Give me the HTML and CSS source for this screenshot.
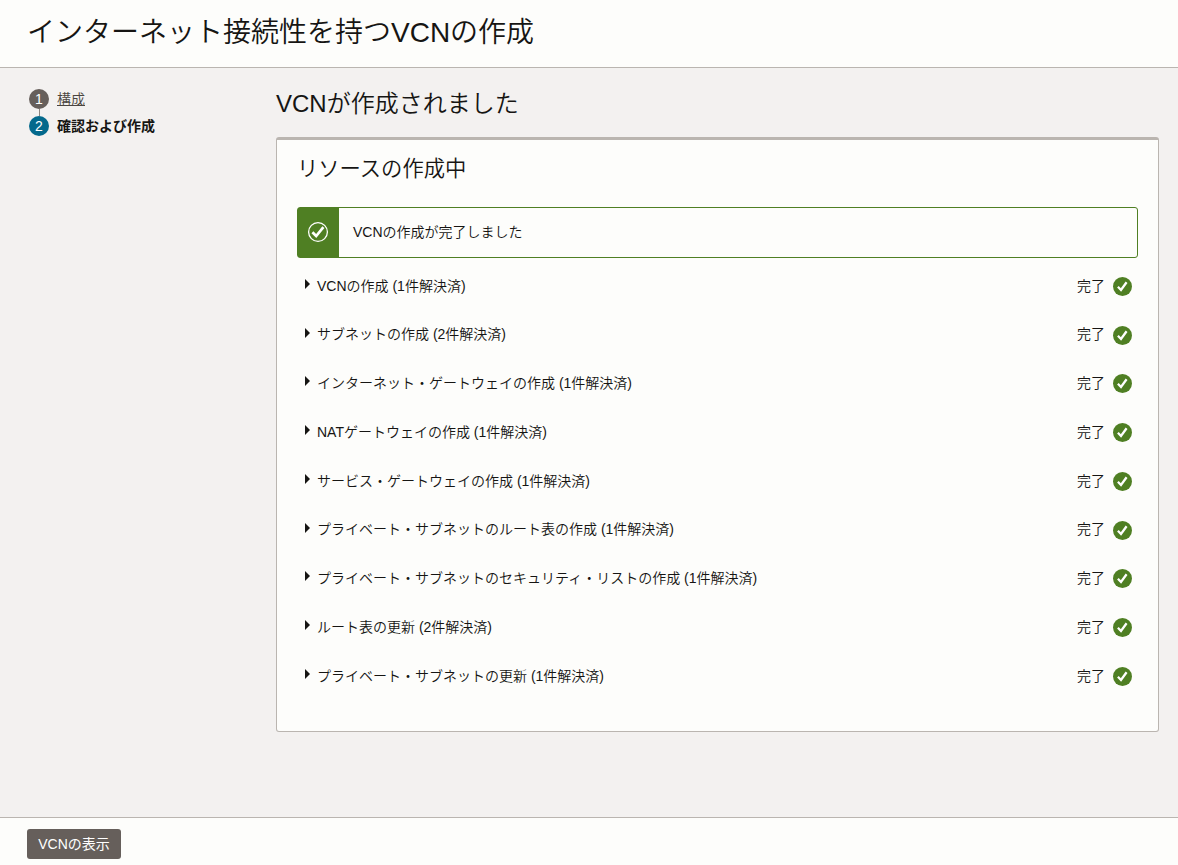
FILE: index.html
```html
<!DOCTYPE html>
<html lang="ja">
<head>
<meta charset="utf-8">
<title>インターネット接続性を持つVCNの作成</title>
<meta name="viewport" content="width=device-width, initial-scale=1">
<link rel="stylesheet" href="styles.css">
</head>

<body>
<svg width="0" height="0" class="sprite">
  <symbol id="done" viewBox="0 0 19 19">
    <circle cx="9.5" cy="9.5" r="9.5" fill="#4f7f23"/>
    <path d="M4.9 9.7 8 13 13.6 5.3" fill="none" stroke="#fff" stroke-width="2.3"/>
  </symbol>
</svg>

<header class="header">
  <h1 class="title">インターネット接続性を持つVCNの作成</h1>
</header>

<div class="content">
  <ol class="steps">
    <li class="step"><span class="step-num">1</span><a href="#">構成</a></li>
    <li class="step current"><span class="step-num">2</span>確認および作成</li>
  </ol>

  <main class="main">
    <h2 class="heading">VCNが作成されました</h2>

    <section class="panel">
      <h3 class="panel-title">リソースの作成中</h3>

      <div class="banner">
        <div class="banner-icon">
          <svg width="22" height="22" viewBox="0 0 22 22" fill="none" stroke="#fff">
            <circle cx="11" cy="11" r="9.4" stroke-width="1.3"/>
            <path d="M5.4 11.2 9.2 15 16.4 6.2" stroke-width="2.7"/>
          </svg>
        </div>
        <div class="banner-text">VCNの作成が完了しました</div>
      </div>

      <ul class="tasks">
        <li class="task"><span class="arrow"></span><span class="name">VCNの作成 (1件解決済)</span><span class="status">完了</span><svg class="done"><use href="#done"/></svg></li>
        <li class="task"><span class="arrow"></span><span class="name">サブネットの作成 (2件解決済)</span><span class="status">完了</span><svg class="done"><use href="#done"/></svg></li>
        <li class="task"><span class="arrow"></span><span class="name">インターネット・ゲートウェイの作成 (1件解決済)</span><span class="status">完了</span><svg class="done"><use href="#done"/></svg></li>
        <li class="task"><span class="arrow"></span><span class="name">NATゲートウェイの作成 (1件解決済)</span><span class="status">完了</span><svg class="done"><use href="#done"/></svg></li>
        <li class="task"><span class="arrow"></span><span class="name">サービス・ゲートウェイの作成 (1件解決済)</span><span class="status">完了</span><svg class="done"><use href="#done"/></svg></li>
        <li class="task"><span class="arrow"></span><span class="name">プライベート・サブネットのルート表の作成 (1件解決済)</span><span class="status">完了</span><svg class="done"><use href="#done"/></svg></li>
        <li class="task"><span class="arrow"></span><span class="name">プライベート・サブネットのセキュリティ・リストの作成 (1件解決済)</span><span class="status">完了</span><svg class="done"><use href="#done"/></svg></li>
        <li class="task"><span class="arrow"></span><span class="name">ルート表の更新 (2件解決済)</span><span class="status">完了</span><svg class="done"><use href="#done"/></svg></li>
        <li class="task"><span class="arrow"></span><span class="name">プライベート・サブネットの更新 (1件解決済)</span><span class="status">完了</span><svg class="done"><use href="#done"/></svg></li>
      </ul>
    </section>
  </main>
</div>

<footer class="footer">
  <button type="button" class="btn">VCNの表示</button>
</footer>
</body>
</html>
```
FILE: styles.css
```css
* {
  box-sizing: border-box;
}

body {
  display: flex;
  flex-direction: column;
  height: 100vh;
  margin: 0;
  background-color: #f3f1f0;
  color: #161513;
  font: 350 14px/20px "Liberation Sans", "Noto Sans CJK JP", sans-serif;
  overflow: hidden;
}

h1, h2, h3, ul, ol {
  margin: 0;
  padding: 0;
  font-weight: 350;
  list-style: none;
}

.sprite {
  position: absolute;
}

.header {
  height: 68px;
  padding: 13px 27px 0;
  background-color: #fdfdfb;
  border-bottom: 1px solid #bab5b0;
}

.title {
  font-size: 28px;
  line-height: 40px;
}

.content {
  display: flex;
  flex: 1;
  padding: 21px 19px 0 29px;
}

.steps {
  width: 247px;
}

.step {
  display: flex;
  gap: 8px;
  height: 27px;
}

.step a {
  color: #4a4541;
}

.step-num {
  position: relative;
  width: 20px;
  height: 20px;
  border-radius: 50%;
  background-color: #665f5b;
  color: #fff;
  font-weight: 400;
  text-align: center;
}

/*Line joining the two step circles*/
.step:first-child .step-num::after {
  position: absolute;
  content: "";
  left: 10px;
  top: 20px;
  width: 1px;
  height: 7px;
  background-color: #8b8580;
}

.current {
  font-weight: bold;
}

.current .step-num {
  background-color: #04698c;
}

.main {
  flex: 1;
}

.heading {
  height: 48px;
  font-size: 24px;
  line-height: 30px;
}

.panel {
  height: 595px;
  padding: 14px 20px 0;
  background-color: #fdfdfb;
  border: 1px solid #bab5b0;
  border-top-width: 3px;
  border-radius: 3px;
}

.panel-title {
  height: 53px;
  font-size: 21.3px;
  line-height: 31px;
}

.banner {
  display: flex;
  height: 51px;
  border: 1px solid #4f7f23;
  border-radius: 3px;
}

.banner-icon {
  width: 41px;
  padding: 13px 9px;
  background-color: #4f7f23;
}

.banner-text {
  padding-left: 14px;
  line-height: 49px;
}

.tasks {
  padding-top: 4px;
}

.task {
  display: flex;
  align-items: center;
  height: 48.75px;
  padding: 0 6px 0 8px;
}

.arrow {
  margin-bottom: 5px;
  border: 5px solid transparent;
  border-left-color: #161513;
  border-right: 0;
}

.name, .status {
  margin-bottom: 1.5px;
}

.name {
  flex: 1;
  margin-left: 7px;
}

.status {
  margin-right: 8px;
}

.done {
  width: 19px;
  height: 19px;
}

.footer {
  height: 48px;
  padding: 11px 27px 0;
  background-color: #fdfdfb;
  border-top: 1px solid #bab5b0;
}

.btn {
  display: block;
  width: 94px;
  height: 30px;
  padding: 0;
  border: 0;
  border-radius: 3px;
  background-color: #665f5b;
  color: #fff;
  font: inherit;
  font-weight: 400;
}
```
